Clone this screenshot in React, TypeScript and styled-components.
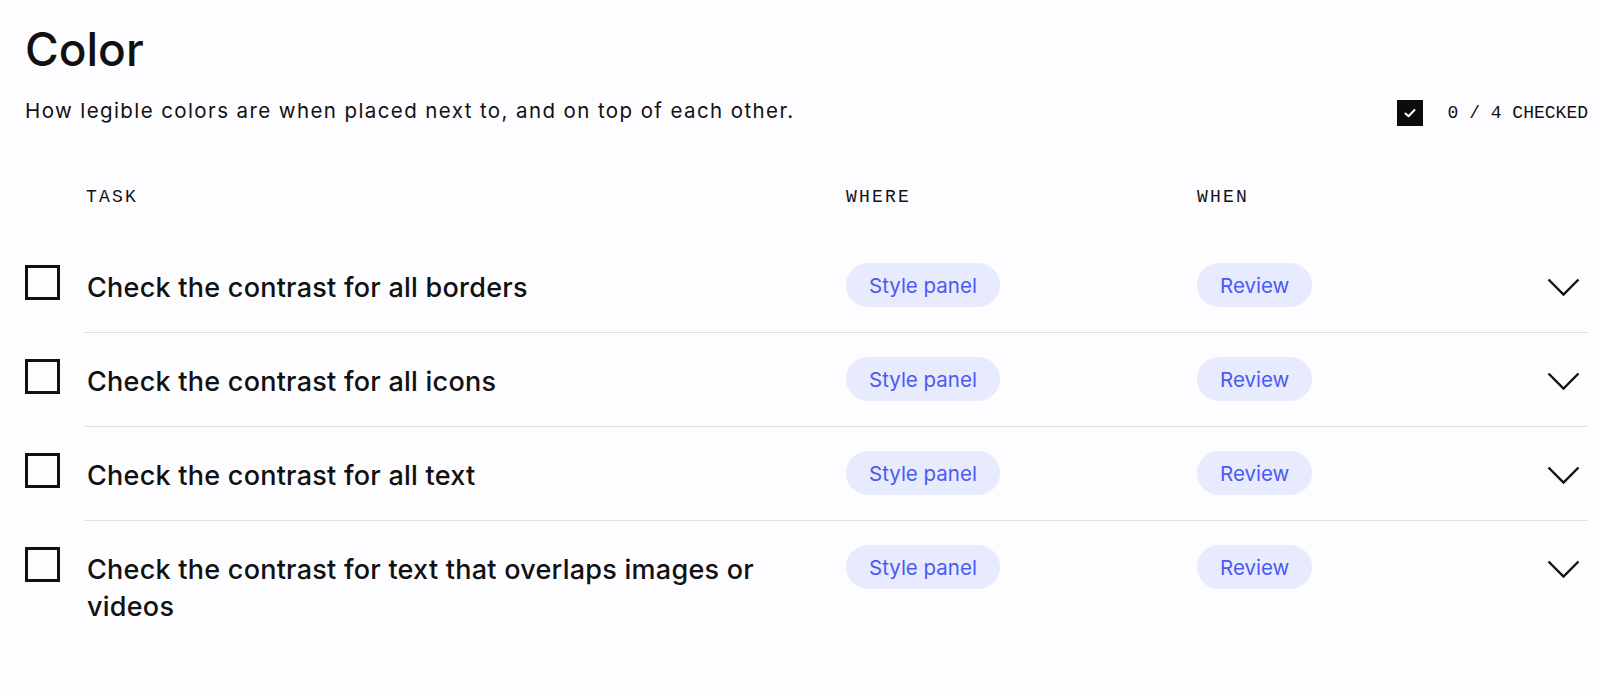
import styled, { createGlobalStyle } from "styled-components";

const tasks = [
  { title: "Check the contrast for all borders", where: "Style panel", when: "Review" },
  { title: "Check the contrast for all icons", where: "Style panel", when: "Review" },
  { title: "Check the contrast for all text", where: "Style panel", when: "Review" },
  { title: "Check the contrast for text that overlaps images or videos", where: "Style panel", when: "Review" },
];

export default function App() {
  return (
    <>
      <GlobalStyle />
      <Page>
        <Title>Color</Title>
        <IntroRow>
          <Intro>How legible colors are when placed next to, and on top of each other.</Intro>
          <Progress>
            <FilledBox>
              <svg width="14" height="14" viewBox="0 0 14 14">
                <polyline points="2.5,7.5 5.5,10.2 11.5,4" fill="none" stroke="#fff" strokeWidth="2" strokeLinecap="round" strokeLinejoin="round" />
              </svg>
            </FilledBox>
            <Mono>0 / 4 CHECKED</Mono>
          </Progress>
        </IntroRow>

        <HeaderRow>
          <CheckCell />
          <HeaderCells>
            <HeadLabel $indent>TASK</HeadLabel>
            <HeadLabel>WHERE</HeadLabel>
            <HeadLabel>WHEN</HeadLabel>
          </HeaderCells>
        </HeaderRow>

        {tasks.map((t) => (
          <TaskRow key={t.title}>
            <CheckCell>
              <EmptyBox />
            </CheckCell>
            <TaskCells>
              <TaskTitle>{t.title}</TaskTitle>
              <div>
                <Pill>{t.where}</Pill>
              </div>
              <div>
                <Pill>{t.when}</Pill>
              </div>
              <Chevron width="33" height="19" viewBox="0 0 33 19">
                <polyline points="1.5,1.5 16.5,16.5 31.5,1.5" fill="none" stroke="#111" strokeWidth="2.4" />
              </Chevron>
            </TaskCells>
          </TaskRow>
        ))}
      </Page>
    </>
  );
}

const GlobalStyle = createGlobalStyle`
  body {
    margin: 0;
    background: #fdfcff;
    color: #111;
    font-family: Inter, "Noto Sans", sans-serif;
  }
`;

const Page = styled.main`
  padding: 21px 12px 40px 25px;
`;

const Title = styled.h1`
  margin: 0;
  font-size: 46px;
  line-height: 56px;
  font-weight: 500;
`;

const IntroRow = styled.div`
  display: flex;
  align-items: flex-start;
  justify-content: space-between;
  margin-top: 20px;
`;

const Intro = styled.p`
  margin: 0;
  font-size: 20.5px;
  line-height: 28px;
  letter-spacing: 1.4px;
`;

const Progress = styled.div`
  display: flex;
  align-items: center;
  gap: 25px;
  margin-top: 3px;
`;

const FilledBox = styled.span`
  width: 26px;
  height: 26px;
  background: #0c0c0e;
  display: flex;
  align-items: center;
  justify-content: center;
`;

const Mono = styled.span`
  font-family: "Liberation Mono", "DejaVu Sans Mono", monospace;
  font-size: 18px;
  line-height: 24px;
`;

const columns = `
  display: grid;
  grid-template-columns: 762px 351px 1fr 41px;
  flex: 1;
`;

const HeaderRow = styled.div`
  display: flex;
  margin-top: 59px;
  margin-bottom: 30px;
`;

const CheckCell = styled.div`
  width: 59px;
  flex: none;
`;

const HeaderCells = styled.div`
  ${columns}
`;

const HeadLabel = styled.span<{ $indent?: boolean }>`
  font-family: "Liberation Mono", "DejaVu Sans Mono", monospace;
  font-size: 18px;
  line-height: 24px;
  letter-spacing: 2.2px;
  padding-left: ${({ $indent }) => ($indent ? "2px" : "0")};
`;

const TaskRow = styled.div`
  display: flex;

  &:last-of-type > div:last-child {
    border-bottom: none;
  }
`;

const EmptyBox = styled.span`
  display: block;
  width: 35px;
  height: 35px;
  box-sizing: border-box;
  border: 3px solid #111;
  margin-top: 26px;
`;

const TaskCells = styled.div`
  ${columns}
  align-items: start;
  padding: 30px 0 25px;
  border-bottom: 1px solid #e0dfe3;
`;

const TaskTitle = styled.span`
  font-size: 27px;
  line-height: 37px;
  font-weight: 500;
  letter-spacing: 0.25px;
  padding: 0 30px 0 3px;
`;

const Pill = styled.span`
  display: inline-flex;
  align-items: center;
  height: 44px;
  padding: 0 23px;
  margin-top: -6px;
  border-radius: 22px;
  background: #e8eafe;
  color: #4a5af2;
  font-size: 20.5px;
`;

const Chevron = styled.svg`
  margin-top: 9px;
`;
